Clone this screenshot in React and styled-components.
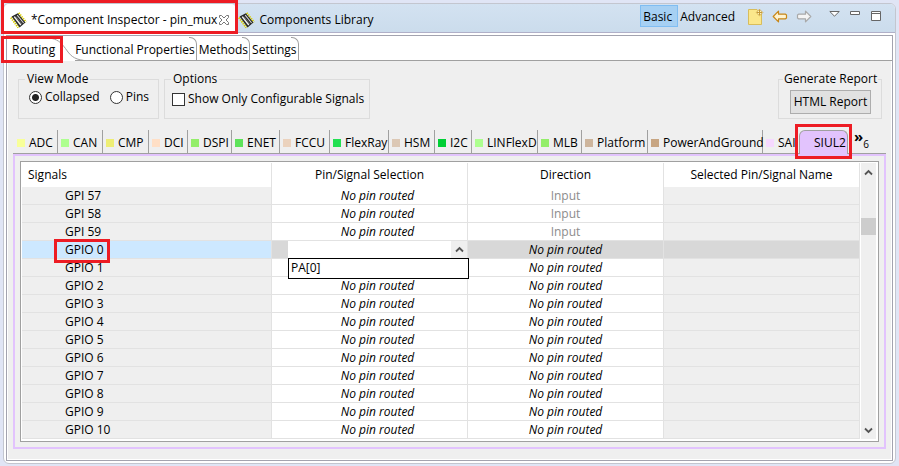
import React, { useState } from "react";
import styled, { createGlobalStyle, css } from "styled-components";

const signalTabs = [
	{ name: "ADC", color: "#f8ff99", width: 44 },
	{ name: "CAN", color: "#adff8f", width: 45 },
	{ name: "CMP", color: "#eeee75", width: 46 },
	{ name: "DCI", color: "#ffdfc6", width: 39 },
	{ name: "DSPI", color: "#93ee69", width: 44 },
	{ name: "ENET", color: "#5ee35a", width: 48 },
	{ name: "FCCU", color: "#ebd2bd", width: 50 },
	{ name: "FlexRay", color: "#22e052", width: 59 },
	{ name: "HSM", color: "#dcc8b5", width: 46 },
	{ name: "I2C", color: "#00cf35", width: 37 },
	{ name: "LINFlexD", color: "#adff8f", width: 66 },
	{ name: "MLB", color: "#93ee69", width: 44 },
	{ name: "Platform", color: "#cdb59d", width: 66 },
	{ name: "PowerAndGround", color: "#c7a582", width: 115 },
	{ name: "SAI", color: "#f6d9ff", width: 36 },
];

const rows = [
	...[57, 58, 59].map((n) => ({
		signal: `GPI ${n}`,
		pin: "No pin routed",
		direction: "Input",
	})),
	...[0, 1, 2, 3, 4, 5, 6, 7, 8, 9, 10].map((n) => ({
		signal: `GPIO ${n}`,
		pin: n === 1 ? "" : "No pin routed",
		direction: "No pin routed",
		selected: n === 0,
	})),
];

const ChipIcon = () => (
	<Icon width="17" height="17" viewBox="0 0 17 17" aria-hidden="true">
		<path
			d="M1 5.5L8.3 15.6M8.6 1L16 10.2"
			stroke="#d6cc00"
			strokeWidth="2.2"
			strokeDasharray="1.3 1"
		/>
		<path d="M1.6 4.6L7.8 1.2L15.4 10.4L9.6 15.4Z" fill="#262626" />
		<path d="M4.2 4.6L10.8 13" stroke="#f2f2f2" strokeWidth="1.5" />
		<path d="M7.2 3.2L13.6 11" stroke="#d5d5d5" strokeWidth="1.1" />
		<path d="M5.8 4.4L12 12" stroke="#777" strokeWidth="0.8" />
	</Icon>
);

const CloseIcon = () => (
	<svg width="12" height="12" viewBox="0 0 12 12" aria-hidden="true">
		<path
			d="M1.5 1.5H3.5L6 4L8.5 1.5H10.5V3.5L8 6L10.5 8.5V10.5H8.5L6 8L3.5 10.5H1.5V8.5L4 6L1.5 3.5Z"
			fill="#fff"
			stroke="#777"
		/>
	</svg>
);

const NoteIcon = () => (
	<svg width="16" height="17" viewBox="0 0 16 17" aria-hidden="true">
		<path d="M0.5 1.5H9L13.5 6V16.5H0.5Z" fill="#fbe78b" stroke="#d8bd5c" />
		<path
			d="M11.5 1.2L14.8 4.5L11.5 7.8L8.2 4.5Z"
			fill="#fff3bd"
			stroke="#c59a3a"
			strokeWidth="0.8"
		/>
		<path d="M11.5 2V7M9 4.5H14" stroke="#c59a3a" />
	</svg>
);

const ArrowIcon = ({ forward }) => (
	<svg width="16" height="13" viewBox="0 0 16 13" aria-hidden="true">
		<path
			transform={forward ? "matrix(-1 0 0 1 16 0)" : undefined}
			d="M1.2 6.5L6.5 1.2V4.2H13.5L14.5 5V8L13.5 8.8H6.5V11.8Z"
			fill={forward ? "#f4f4f4" : "#fff3cf"}
			stroke={forward ? "#a9a9a9" : "#c98717"}
			strokeWidth="1.2"
			strokeLinejoin="round"
		/>
	</svg>
);

const Chevron = ({ down }) => (
	<svg width="9" height="7" viewBox="0 0 9 7" aria-hidden="true">
		<path
			d={down ? "M1 1.5L4.5 5L8 1.5" : "M1 5.5L4.5 2L8 5.5"}
			fill="none"
			stroke="#555"
			strokeWidth="1.8"
		/>
	</svg>
);

const PinCombo = () => (
	<Combo>
		<ComboSelect aria-label="Pin for GPIO 0" defaultValue="">
			<option value=""></option>
			<option value="PA[0]">PA[0]</option>
		</ComboSelect>
		<ComboArrow>
			<Chevron />
		</ComboArrow>
		<ComboList role="listbox" aria-label="Available pins">
			<li role="option" aria-selected="false">
				PA[0]
			</li>
		</ComboList>
	</Combo>
);

const SignalTable = () => (
	<TableBox>
		<Table>
			<colgroup>
				<col width="250" />
				<col width="196" />
				<col width="196" />
				<col width="196" />
			</colgroup>
			<thead>
				<tr>
					<th>Signals</th>
					<th>Pin/Signal Selection</th>
					<th>Direction</th>
					<th>Selected Pin/Signal Name</th>
				</tr>
			</thead>
			<tbody>
				{rows.map((row) => (
					<Row key={row.signal} $selected={row.selected}>
						<SignalCell $selected={row.selected}>
							<SignalName>
								{row.signal}
								{row.selected && <Highlight $inset="-3px -6px -5px -11px" />}
							</SignalName>
						</SignalCell>
						<PinCell>{row.selected ? <PinCombo /> : row.pin}</PinCell>
						<ValueCell $muted={row.direction === "Input"}>
							{row.direction}
						</ValueCell>
						<NameCell $selected={row.selected} />
					</Row>
				))}
			</tbody>
		</Table>
		<ScrollTrack>
			<Chevron />
			<ScrollThumb />
			<ScrollSpace />
			<Chevron down />
		</ScrollTrack>
	</TableBox>
);

const App = () => {
	const [viewMode, setViewMode] = useState("collapsed");
	const [onlyConfigurable, setOnlyConfigurable] = useState(false);

	return (
		<>
			<GlobalStyle />
			<Panel>
				<TitleBar>
					<TitleTab $active>
						<ChipIcon />
						<span>*Component Inspector - pin_mux</span>
						<IconButton aria-label="Close">
							<CloseIcon />
						</IconButton>
						<Highlight $inset="-4px -2px -2px -3px" />
					</TitleTab>
					<TitleTab>
						<ChipIcon />
						<span>Components Library</span>
					</TitleTab>
					<Toolbar>
						<ModeButton $active>Basic</ModeButton>
						<ModeButton>Advanced</ModeButton>
						<ToolIcons>
							<IconButton aria-label="New note">
								<NoteIcon />
							</IconButton>
							<IconButton aria-label="Back">
								<ArrowIcon />
							</IconButton>
							<IconButton aria-label="Forward">
								<ArrowIcon forward />
							</IconButton>
						</ToolIcons>
						<WindowIcons>
							<IconButton aria-label="View menu">
								<svg width="11" height="12" viewBox="0 0 11 12">
									<path d="M0.8 1.5H10.2L5.5 6.2Z" fill="#fff" stroke="#666" />
								</svg>
							</IconButton>
							<IconButton aria-label="Minimize">
								<svg width="11" height="12" viewBox="0 0 11 12">
									<path d="M0.5 1.5H9.5V4.5H0.5Z" fill="#fff" stroke="#666" />
								</svg>
							</IconButton>
							<IconButton aria-label="Maximize">
								<svg width="11" height="12" viewBox="0 0 11 12">
									<path
										d="M0.5 1.5H9.5V10.5H0.5ZM0.5 3.5H9.5"
										fill="#fff"
										stroke="#666"
									/>
								</svg>
							</IconButton>
						</WindowIcons>
					</Toolbar>
				</TitleBar>
				<Inner>
					<PageTabs>
						<RoutingTab>
							Routing
							<Highlight $inset="0 -8px -2px -11px" />
						</RoutingTab>
						<Curve width="34" height="25" viewBox="0 0 34 25" aria-hidden="true">
							<path
								d="M2 2.5C9 4 12 8 15.5 12.5C20 19 23 23 34 24.5"
								fill="none"
								stroke="#a0a0a0"
							/>
						</Curve>
						<PageTab>Functional Properties</PageTab>
						<PageTab>Methods</PageTab>
						<PageTab>Settings</PageTab>
						<PageTabsRest />
					</PageTabs>
					<Content>
						<Groups>
							<Group $width="141px">
								<legend>View Mode</legend>
								<Choices>
									<Choice>
										<Radio
											name="view-mode"
											checked={viewMode === "collapsed"}
											onChange={() => setViewMode("collapsed")}
										/>
										Collapsed
									</Choice>
									<Choice>
										<Radio
											name="view-mode"
											checked={viewMode === "pins"}
											onChange={() => setViewMode("pins")}
										/>
										Pins
									</Choice>
								</Choices>
							</Group>
							<Group $width="206px">
								<legend>Options</legend>
								<Choices $low>
									<Choice>
										<CheckBox
											checked={onlyConfigurable}
											onChange={(e) => setOnlyConfigurable(e.target.checked)}
										/>
										Show Only Configurable Signals
									</Choice>
								</Choices>
							</Group>
							<Group $width="104px" $right>
								<legend>Generate Report</legend>
								<ReportButton>HTML Report</ReportButton>
							</Group>
						</Groups>
						<SignalTabs>
							{signalTabs.map((tab) => (
								<SignalTab key={tab.name} $width={tab.width}>
									<Swatch $color={tab.color} />
									{tab.name}
								</SignalTab>
							))}
							<ActiveSignalTab>
								SIUL2
								<Highlight $inset="-7px -5px -5px -5px" />
							</ActiveSignalTab>
							<MoreTabs aria-label="6 more tabs">
								<b>»</b>
								<small>6</small>
							</MoreTabs>
						</SignalTabs>
						<Frame>
							<SignalTable />
						</Frame>
					</Content>
				</Inner>
			</Panel>
		</>
	);
};

const GlobalStyle = createGlobalStyle`
	* {
		box-sizing: border-box;
	}
	body {
		margin: 0;
		padding: 3px 3px 2px;
		background: #e0e5f5;
		color: #000;
		font-family: "Open Sans", "Noto Sans", sans-serif;
		font-size: 12px;
		line-height: 16px;
	}
	button, select, input {
		font: inherit;
		color: inherit;
		margin: 0;
	}
	svg {
		display: block;
		flex-shrink: 0;
	}
`;

const Icon = styled.svg`
	flex-shrink: 0;
`;

const Highlight = styled.span`
	position: absolute;
	inset: ${(p) => p.$inset};
	border: 3px solid #ed1c24;
	pointer-events: none;
	z-index: 2;
`;

const Panel = styled.main`
	border: 1px solid #c3c6cf;
	border-radius: 6px;
	background: #fff;
`;

const TitleBar = styled.header`
	display: flex;
	height: 29px;
	border-bottom: 1px solid #b0b0c8;
	border-radius: 5px 5px 0 0;
	background: linear-gradient(#d3e2f1, #cbdcec);
`;

const TitleTab = styled.div`
	position: relative;
	display: flex;
	align-items: center;
	gap: 4px;
	padding: 4px 2px 0;
	white-space: nowrap;
	${(p) =>
		p.$active &&
		css`
			gap: 4px;
			padding: 4px 6px 0;
			background: #fff;
			border-radius: 5px 5px 0 0;
			button {
				margin-left: -3px;
			}
		`}
`;

const IconButton = styled.button`
	display: flex;
	padding: 0;
	border: 0;
	background: none;
`;

const Toolbar = styled.div`
	display: flex;
	margin-left: auto;
	padding: 1px 13px 0 0;
`;

const ModeButton = styled.button`
	height: 22px;
	padding: 1px 1px 0;
	border: 1px solid transparent;
	background: none;
	${(p) =>
		p.$active &&
		css`
			width: 38px;
			padding-left: 2px;
			text-align: left;
			border-color: #7fbdf2;
			background: #a6d0f3;
		`}
`;

const ToolIcons = styled.div`
	display: flex;
	align-items: center;
	gap: 8px;
	height: 22px;
	margin-left: 11px;
`;

const WindowIcons = styled.div`
	display: flex;
	align-items: center;
	gap: 10px;
	height: 22px;
	margin-left: 17px;
`;

const Inner = styled.div`
	margin: 2px;
	border: 1px solid #a3a3af;
`;

const PageTabs = styled.nav`
	display: flex;
	height: 25px;
	background: #fff;
`;

const RoutingTab = styled.button`
	position: relative;
	height: 25px;
	padding: 2px 0 0;
	margin-left: 5px;
	border: 0;
	background: none;
`;

const Curve = styled.svg`
	margin: 0 -9px 0 -5px;
`;

const PageTab = styled.button`
	position: relative;
	padding: 3px 2px 0 0;
	margin: 0;
	border: 0;
	border-bottom: 1px solid #a0a0a0;
	background: none;
	white-space: nowrap;
	& + & {
		padding-left: 2px;
	}
	&::after {
		content: "";
		position: absolute;
		inset: 1px 0 0 auto;
		width: 7px;
		border: solid #a0a0a0;
		border-width: 1px 1px 0 0;
		border-radius: 0 7px 0 0;
	}
`;

const PageTabsRest = styled.div`
	flex: 1;
	border-bottom: 1px solid #a0a0a0;
`;

const Content = styled.div`
	margin: 0 1px 1px;
	padding: 10px 5px;
	background: #efefef;
`;

const Groups = styled.div`
	display: flex;
	gap: 5px;
	padding: 0 4px 0 5px;
`;

const Group = styled.fieldset`
	width: ${(p) => p.$width};
	min-width: 0;
	height: 48px;
	margin: 0;
	margin-left: ${(p) => (p.$right ? "auto" : "0")};
	padding: ${(p) => (p.$right ? "0 4px" : "0 6px")};
	border: 1px solid #dcdcdc;
	white-space: nowrap;
	legend {
		padding: ${(p) => (p.$right ? "0 1px" : "0 2px")};
	}
`;

const Choices = styled.div`
	display: flex;
	gap: 10px;
	padding: ${(p) => (p.$low ? "4px 0 0 1px" : "2px 0 0 4px")};
`;

const Choice = styled.label`
	display: flex;
	align-items: center;
	gap: 3px;
`;

const Radio = styled.input.attrs({ type: "radio" })`
	appearance: none;
	width: 13px;
	height: 13px;
	border: 1px solid #333;
	border-radius: 50%;
	background: #fff;
	&:checked {
		background: radial-gradient(#222 3px, #fff 4px);
	}
`;

const CheckBox = styled.input.attrs({ type: "checkbox" })`
	appearance: none;
	width: 13px;
	height: 13px;
	border: 1px solid #333;
	background: #fff;
	&:checked {
		background: #333;
	}
`;

const ReportButton = styled.button`
	display: block;
	width: 81px;
	height: 24px;
	margin: 3px 0 0 7px;
	padding: 0;
	border: 1px solid #adadad;
	background: #e1e1e1;
`;

const SignalTabs = styled.nav`
	display: flex;
	height: 24px;
	margin-top: 11px;
	padding-left: 1px;
	border-bottom: 1px solid #a0a0a0;
`;

const SignalTab = styled.button`
	display: flex;
	flex: none;
	align-items: center;
	gap: 4px;
	width: ${(p) => p.$width}px;
	padding: 2px 0 0 3px;
	border: 0;
	border-right: 1px solid #a0a0a0;
	background: none;
	white-space: nowrap;
	&:nth-last-child(3) {
		border-right: 0;
	}
`;

const Swatch = styled.span`
	flex: none;
	width: 8px;
	height: 8px;
	background: ${(p) => p.$color};
`;

const ActiveSignalTab = styled.button`
	position: relative;
	flex: none;
	width: 49px;
	height: 24px;
	padding: 1px 0 0 14px;
	border: 1px solid #a0a0a0;
	border-bottom: 0;
	border-radius: 6px 6px 0 0;
	background: #e2c3fd;
	text-align: left;
`;

const MoreTabs = styled.button`
	display: flex;
	padding: 0;
	margin-left: 6px;
	border: 0;
	background: none;
	b {
		font-size: 15px;
		line-height: 12px;
	}
	small {
		font-size: 10px;
		line-height: 28px;
	}
`;

const Frame = styled.section`
	padding: 5px;
	border: 2px solid #e2c3fd;
`;

const TableBox = styled.div`
	display: flex;
	gap: 1px;
	padding: 1px 2px 2px 1px;
	border: 1px solid #a0a0a0;
	background: #fff;
`;

const Table = styled.table`
	flex: 1;
	width: 100%;
	table-layout: fixed;
	border-collapse: separate;
	border-spacing: 0;
	th,
	td {
		padding: 0;
		border-right: 1px solid #e2e2e2;
		text-align: center;
	}
	th {
		height: 24px;
		font-weight: normal;
	}
	th:first-child {
		padding-left: 6px;
		text-align: left;
	}
	td {
		height: 18px;
		border-bottom: 1px solid #e2e2e2;
	}
`;

const Row = styled.tr`
	background: ${(p) => (p.$selected ? "#d8d8d8" : "#fff")};
`;

const SignalCell = styled.td`
	background: ${(p) => (p.$selected ? "#cde8ff" : "#efefef")};
	&& {
		padding-left: 43px;
		text-align: left;
	}
`;

const SignalName = styled.span`
	position: relative;
	display: inline-block;
	vertical-align: top;
`;

const ValueCell = styled.td`
	color: ${(p) => (p.$muted ? "#8c8c8c" : "#000")};
	font-style: ${(p) => (p.$muted ? "normal" : "italic")};
`;

const PinCell = styled.td`
	font-style: italic;
	&& {
		padding-left: 16px;
	}
`;

const NameCell = styled.td`
	background: ${(p) => (p.$selected ? "#d8d8d8" : "#efefef")};
`;

const Combo = styled.div`
	position: relative;
	display: flex;
	height: 17px;
	font-style: normal;
`;

const ComboSelect = styled.select`
	appearance: none;
	flex: 1;
	border: 0;
	border-radius: 0;
	background: #fff;
`;

const ComboArrow = styled.span`
	display: flex;
	align-items: center;
	justify-content: center;
	width: 16px;
	background: #efefef;
`;

const ComboList = styled.ul`
	position: absolute;
	top: 17px;
	left: 0;
	right: -2px;
	z-index: 1;
	margin: 0;
	padding: 1px 2px 2px;
	border: 1px solid #000;
	background: #fff;
	list-style: none;
	text-align: left;
`;

const ScrollTrack = styled.div`
	display: flex;
	flex-direction: column;
	align-items: center;
	width: 15px;
	padding: 6px 0 5px;
	background: #efefef;
`;

const ScrollThumb = styled.div`
	width: 15px;
	height: 17px;
	margin-top: 42px;
	background: #cdcdcd;
`;

const ScrollSpace = styled.div`
	flex: 1;
`;

export default App;
